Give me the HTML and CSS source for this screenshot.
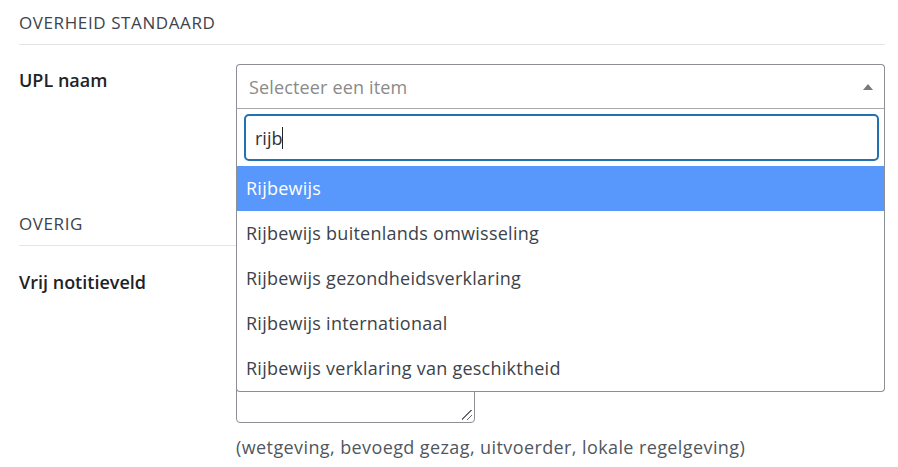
FILE: index.html
```html
<!DOCTYPE html>
<html lang="nl">
<head>
<meta charset="utf-8">
<title>UPL</title>
<link rel="stylesheet" href="styles.css">
</head>
<body>
<div class="page">
  <h2 class="section-title">OVERHEID STANDAARD</h2>
  <div class="row row-upl">
    <div class="label">UPL naam</div>
    <div class="field">
      <div class="select">
        <span class="placeholder">Selecteer een item</span>
        <span class="arrow"></span>
      </div>
      <div class="dropdown">
        <div class="search-wrap">
          <div class="search"><span class="search-text">rijb</span><span class="caret"></span></div>
        </div>
        <ul class="options">
          <li class="option active">Rijbewijs</li>
          <li class="option">Rijbewijs buitenlands omwisseling</li>
          <li class="option">Rijbewijs gezondheidsverklaring</li>
          <li class="option">Rijbewijs internationaal</li>
          <li class="option">Rijbewijs verklaring van geschiktheid</li>
        </ul>
      </div>
    </div>
  </div>
  <h2 class="section-title section-overig">OVERIG</h2>
  <div class="row row-notes">
    <div class="label">Vrij notitieveld</div>
    <div class="field">
      <div class="textarea"><span class="grip"></span></div>
      <p class="description">(wetgeving, bevoegd gezag, uitvoerder, lokale regelgeving)</p>
    </div>
  </div>
</div>
</body>
</html>
```

FILE: styles.css
```css
html, body {
  margin: 0;
  padding: 0;
  background: #fff;
}
body {
  font-family: "Open Sans", "Noto Sans", sans-serif;
  color: #3c434a;
  width: 898px;
  height: 467px;
  overflow: hidden;
}
.page {
  padding: 0 13px 0 19px;
}
.section-title {
  margin: 0;
  font-size: 17px;
  font-weight: 400;
  color: #3c434a;
  letter-spacing: 0.6px;
  padding-top: 12px;
  height: 32px;
  line-height: 22px;
  border-bottom: 1px solid #e2e4e7;
  box-sizing: content-box;
}
.section-overig {
  width: 217px;
  padding-top: 0;
}
.row {
  display: grid;
  grid-template-columns: 217px 649px;
}
.row-upl {
  padding-top: 19px;
  height: 149px;
}
.row-notes {
  padding-top: 20px;
}
.label {
  font-size: 18px;
  font-weight: 600;
  color: #1d2327;
  line-height: 22px;
  padding-top: 5px;
}
.field {
  position: relative;
}
.select {
  height: 45px;
  box-sizing: border-box;
  border: 1px solid #8c8f94;
  border-radius: 4px 4px 0 0;
  border-bottom-color: #aaa;
  display: flex;
  align-items: center;
  justify-content: space-between;
  padding: 0 10px 0 12px;
}
.placeholder {
  font-size: 18px;
  color: #8a8a8a;
  letter-spacing: 0.15px;
}
.arrow {
  width: 0;
  height: 0;
  border-left: 5px solid transparent;
  border-right: 5px solid transparent;
  border-bottom: 6px solid #7a7a7a;
  margin-right: 1px;
}
.dropdown {
  position: absolute;
  top: 44px;
  left: 0;
  width: 649px;
  background: #fff;
  border: 1px solid #8c8f94;
  border-top: 1px solid #aaa;
  border-radius: 0 0 4px 4px;
  box-sizing: border-box;
  z-index: 5;
}
.search-wrap {
  padding: 5px 5px 5px 7px;
}
.search {
  height: 47px;
  box-sizing: border-box;
  border: 2px solid #2271b1;
  border-radius: 5px;
  display: flex;
  align-items: center;
  padding-left: 9px;
  font-size: 18px;
  color: #2c3338;
}
.caret {
  display: inline-block;
  width: 1px;
  height: 22px;
  background: #1d2327;
}
.options {
  list-style: none;
  margin: 0;
  padding: 0;
}
.option {
  height: 45px;
  line-height: 45px;
  padding-left: 9px;
  font-size: 18px;
  color: #3c434a;
  letter-spacing: 0.25px;
}
.option.active {
  background: #5897fb;
  color: #fff;
}
.textarea {
  position: relative;
  width: 239px;
  height: 157px;
  box-sizing: border-box;
  border: 1px solid #8c8f94;
  border-radius: 4px;
}
.grip {
  position: absolute;
  right: 2px;
  bottom: 2px;
  width: 10px;
  height: 10px;
  background:
    linear-gradient(135deg, transparent 45%, #6b6b6b 45%, #6b6b6b 52%, transparent 52%, transparent 72%, #6b6b6b 72%, #6b6b6b 79%, transparent 79%);
}
.description {
  margin: 12px 0 0;
  font-size: 18px;
  color: #50575e;
  letter-spacing: 0.4px;
}
```
